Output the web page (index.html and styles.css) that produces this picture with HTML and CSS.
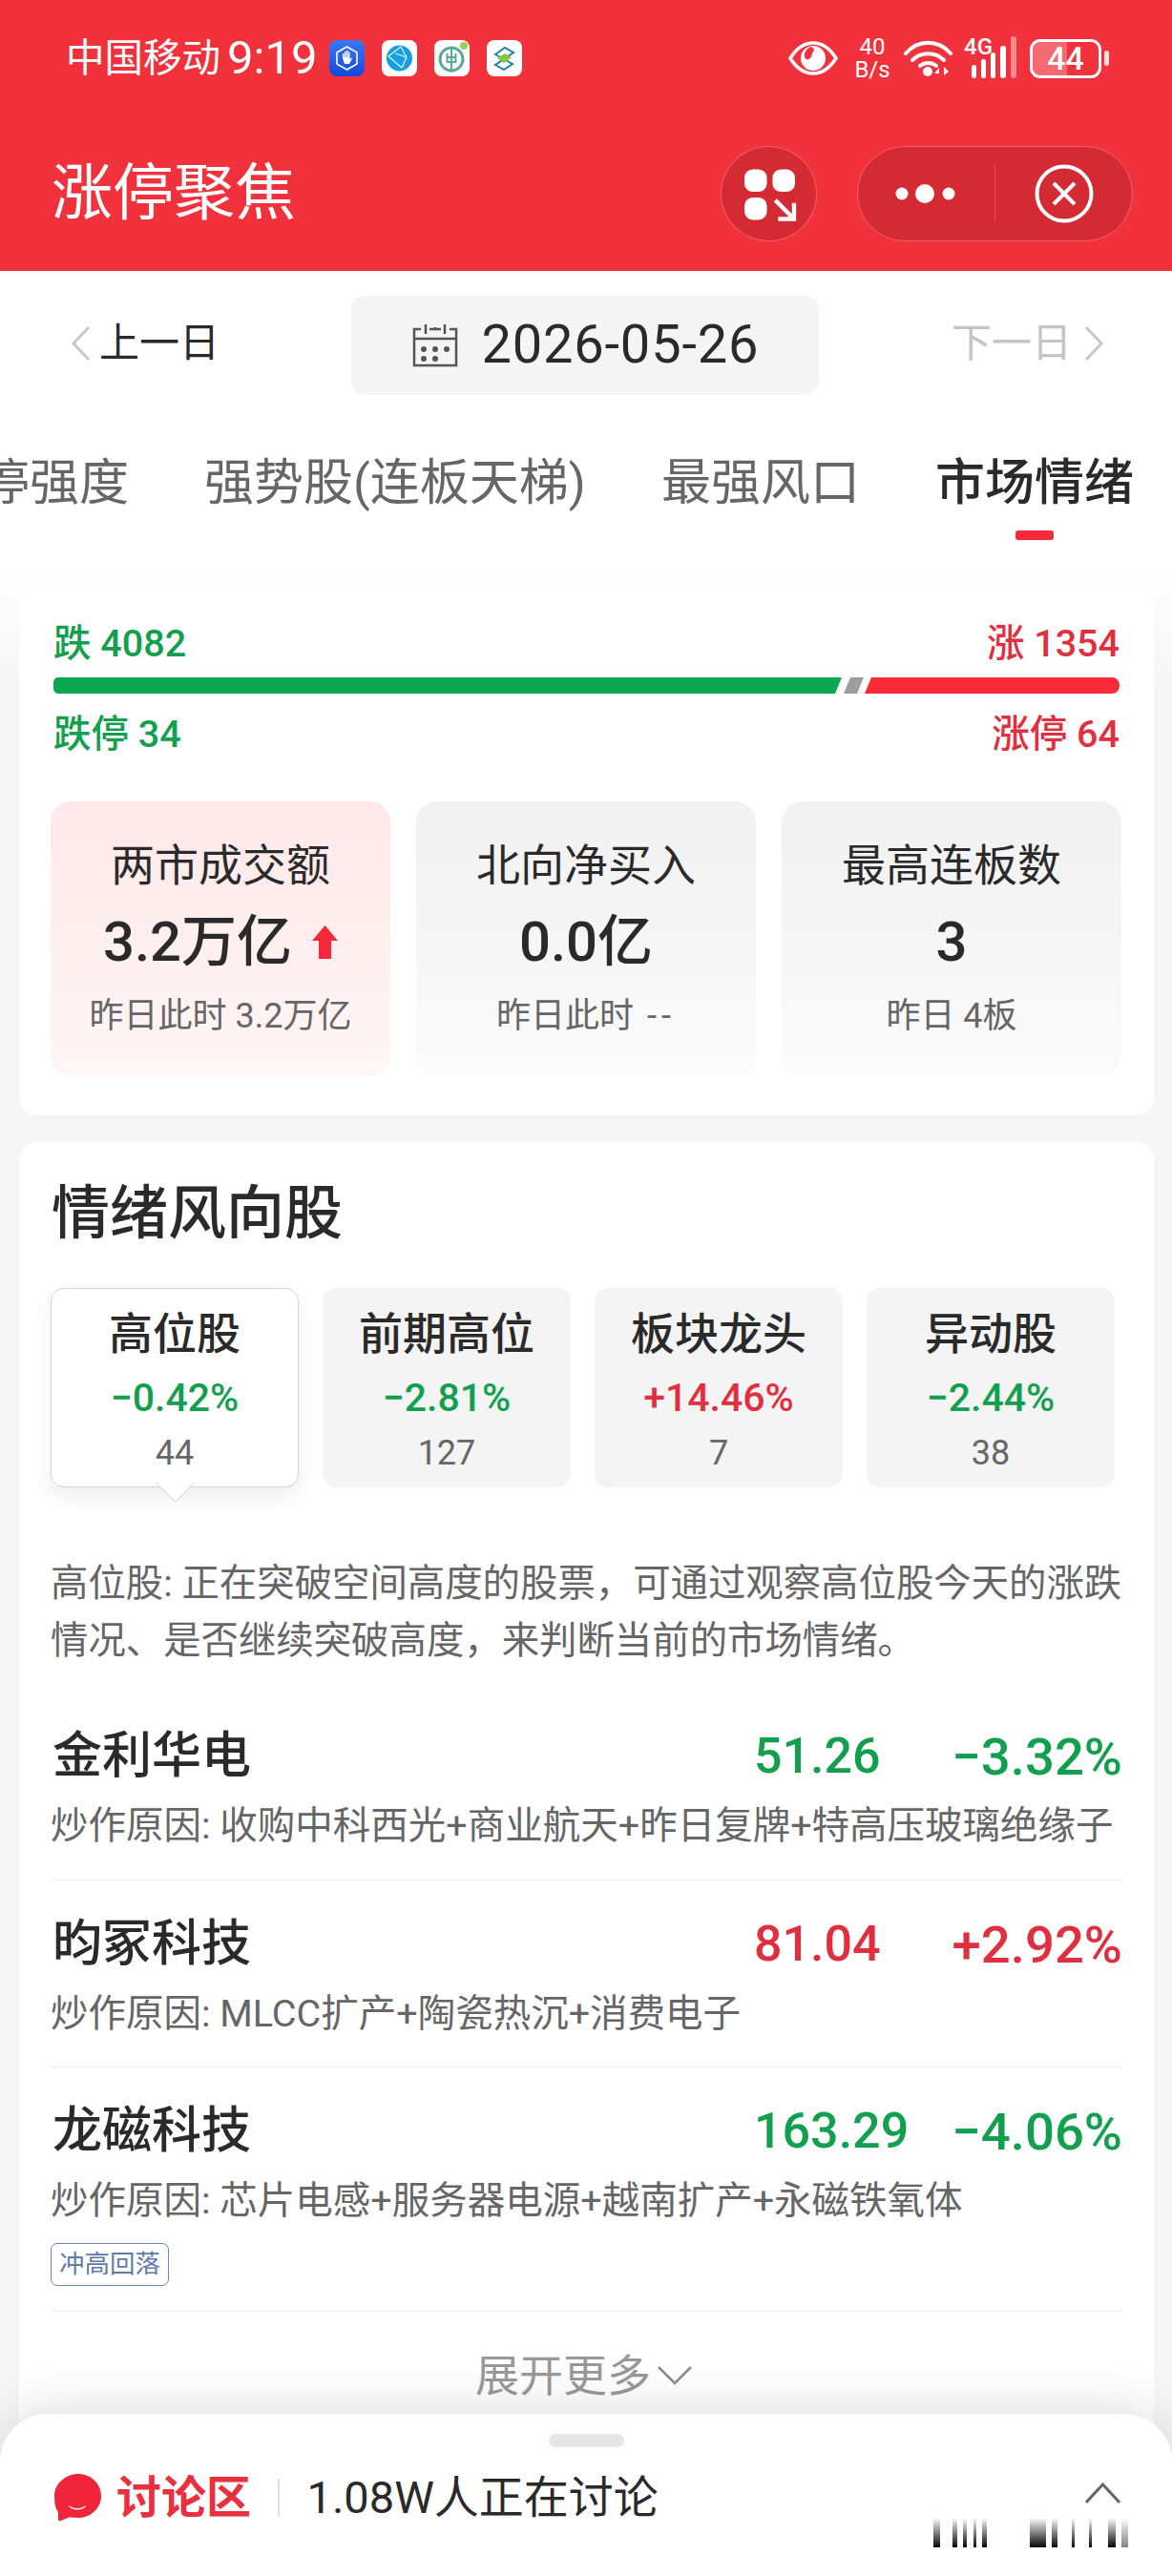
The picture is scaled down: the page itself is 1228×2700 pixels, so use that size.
FILE: index.html
```html
<!DOCTYPE html>
<html lang="zh-CN">
<head>
<meta charset="utf-8">
<title>涨停聚焦</title>
<link rel="stylesheet" href="styles.css">
</head>
<body>
<div class="page">
  <header class="header">
    <div class="status">
      <div class="status-left">
        <span class="carrier">中国移动</span>
        <span class="clock">9:19</span>
        <div class="apps">
          <svg class="app" viewBox="0 0 37 38"><defs><linearGradient id="ab" x1="0" y1="0" x2="0" y2="1"><stop offset="0" stop-color="#3a78f2"/><stop offset="1" stop-color="#1449dd"/></linearGradient></defs><rect width="37" height="38" rx="8" fill="url(#ab)"/><path d="M18.5 7 29 13v12l-10.500 6L8 25V13z" fill="none" stroke="#fff" stroke-width="1.600"/><path d="M14 19v-5h1.500v4h.5v-6h1.500v6h.5v-7h1.500v7h.5v-5.500h1.500V20l1.500-1.500 1 .8-3 5.700h-5z" fill="#fff"/></svg>
          <svg class="app" viewBox="0 0 37 38"><rect width="37" height="38" rx="8" fill="#fff"/><circle cx="18.500" cy="19" r="13.500" fill="#169fe0"/><path d="M7 17 20 7M7 17l14 12M20 7l6 11-5 11M26 18 14 14" fill="none" stroke="#dff3fb" stroke-width="1.200"/></svg>
          <svg class="app" viewBox="0 0 37 38"><rect width="37" height="38" rx="8" fill="#fff"/><circle cx="18" cy="20" r="12" fill="none" stroke="#5aa99a" stroke-width="3"/><path d="M18 7v27M13.500 14v9h9v-9M13.500 18h9" fill="none" stroke="#5aa99a" stroke-width="2"/><circle cx="31" cy="6" r="4" fill="#9ccf5a"/></svg>
          <svg class="app" viewBox="0 0 37 38"><rect width="37" height="38" rx="8" fill="#fff"/><path d="M9 15 19 8l9 5-10 7 9 5-9 6-9-5 9-6z" fill="none" stroke="#1b82a8" stroke-width="2"/><path d="M11 19 19 14l7 4-8 6z" fill="#8cc63f"/></svg>
        </div>
      </div>
      <div class="status-right">
        <svg class="eye" viewBox="0 0 52 38"><path d="M2 19C9 8 17 3 26 3s17 5 24 16c-7 11-15 16-24 16S9 30 2 19z" fill="none" stroke="#fff" stroke-width="3.500"/><circle cx="26" cy="19" r="13" fill="#fff"/><path d="M24 7c-5 2-8 6-7 11 1 3 4 3 6 1 2-2 1-5 4-8 0-2-1-3-3-4z" fill="#f1313b"/></svg>
        <div class="speed"><span>40</span><span>B/s</span></div>
        <svg class="wifi" viewBox="0 0 51 40"><g fill="none" stroke="#fff" stroke-width="4" stroke-linecap="round"><path d="M2 15C15 0 36 0 49 15"/><path d="M9 22c9-9 24-9 33 0"/><path d="M17 28c5-4 12-4 17 0"/></g><circle cx="25" cy="34" r="5" fill="#fff"/><path d="M37 38V30l-5 6h5zM42 29v9l5-4z" fill="#fff"/></svg>
        <div class="signal">
          <span class="gen">4G</span>
          <svg class="bars" viewBox="0 0 48 46"><rect x="0" y="30" width="5" height="14" rx="2.500" fill="#fff"/><rect x="10" y="24" width="5" height="20" rx="2.500" fill="#fff"/><rect x="20" y="17" width="5" height="27" rx="2.500" fill="#fff"/><rect x="30" y="10" width="6" height="34" rx="3" fill="#fff"/><rect x="41" y="0" width="6" height="44" rx="3" fill="#ff8a8f"/></svg>
        </div>
        <div class="battery"><div class="battery-body"><span class="battery-fill"></span><span class="battery-num">44</span></div><span class="battery-nub"></span></div>
      </div>
    </div>
    <div class="nav">
      <h1 class="nav-title">涨停聚焦</h1>
      <div class="nav-actions">
        <div class="round-btn">
          <svg viewBox="0 0 100 100" class="grid-ico"><rect x="24" y="24" width="24" height="24" rx="9" fill="#fff"/><rect x="54" y="24" width="24" height="24" rx="9" fill="#fff"/><rect x="24" y="54" width="24" height="24" rx="9" fill="#fff"/><path d="M57 57 75 75M77 60v17H60" fill="none" stroke="#fff" stroke-width="4.500"/></svg>
        </div>
        <div class="capsule">
          <div class="cap-half"><svg viewBox="0 0 64 24" class="dots"><circle cx="7" cy="12" r="6.500" fill="#fff"/><circle cx="31" cy="12" r="10" fill="#fff"/><circle cx="56" cy="12" r="6.500" fill="#fff"/></svg></div>
          <span class="cap-sep"></span>
          <div class="cap-half"><svg viewBox="0 0 62 62" class="close"><circle cx="31" cy="31" r="28.500" fill="none" stroke="#fff" stroke-width="4"/><path d="M20 20 42 42M42 20 20 42" stroke="#fff" stroke-width="4"/></svg></div>
        </div>
      </div>
    </div>
  </header>

  <div class="datebar">
    <div class="day-link"><svg class="chev" viewBox="0 0 21 38"><path d="M19 2 3 19l16 17" fill="none" stroke="#c8c8c8" stroke-width="3"/></svg><span>上一日</span></div>
    <div class="date-box">
      <svg class="cal" viewBox="0 0 48 48"><g fill="none" stroke="#555" stroke-width="2.500"><path d="M9 7H2v38h44V7h-7M18 7h12M2 17h44"/><path d="M14 2v10M34 2v10M24 5v2"/></g><g fill="#555"><circle cx="12" cy="28" r="3"/><circle cx="24" cy="28" r="3"/><circle cx="36" cy="28" r="3"/><circle cx="12" cy="38" r="3"/><circle cx="24" cy="38" r="3"/></g></svg>
      <span class="date-text">2026-05-26</span>
    </div>
    <div class="day-link is-off"><span>下一日</span><svg class="chev" viewBox="0 0 21 38"><path d="M2 2l16 17L2 36" fill="none" stroke="#c8c8c8" stroke-width="3"/></svg></div>
  </div>

  <nav class="tabs">
    <div class="tab">涨停强度</div>
    <div class="tab">强势股(连板天梯)</div>
    <div class="tab">最强风口</div>
    <div class="tab is-active">市场情绪</div>
  </nav>

  <main class="content">
    <section class="card market">
      <div class="line"><span class="down">跌 4082</span><span class="up">涨 1354</span></div>
      <div class="ratio"><span class="ratio-down"></span><span class="ratio-flat"></span><span class="ratio-up"></span></div>
      <div class="line line-limit"><span class="down">跌停 34</span><span class="up">涨停 64</span></div>
      <div class="stats">
        <div class="stat is-hot">
          <div class="stat-title">两市成交额</div>
          <div class="stat-value">3.2万亿<svg class="up-arrow" viewBox="0 0 27 35"><path d="M13.500 0 27 16h-7v19H7V16H0z" fill="#f5293a"/></svg></div>
          <div class="stat-sub">昨日此时 3.2万亿</div>
        </div>
        <div class="stat">
          <div class="stat-title">北向净买入</div>
          <div class="stat-value">0.0亿</div>
          <div class="stat-sub">昨日此时 <span class="dash">--</span></div>
        </div>
        <div class="stat">
          <div class="stat-title">最高连板数</div>
          <div class="stat-value">3</div>
          <div class="stat-sub">昨日 4板</div>
        </div>
      </div>
    </section>

    <section class="card mood">
      <h2 class="mood-title">情绪风向股</h2>
      <div class="groups">
        <div class="group is-current"><div class="group-name">高位股</div><div class="group-pct down">−0.42%</div><div class="group-num">44</div></div>
        <div class="group"><div class="group-name">前期高位</div><div class="group-pct down">−2.81%</div><div class="group-num">127</div></div>
        <div class="group"><div class="group-name">板块龙头</div><div class="group-pct up">+14.46%</div><div class="group-num">7</div></div>
        <div class="group"><div class="group-name">异动股</div><div class="group-pct down">−2.44%</div><div class="group-num">38</div></div>
      </div>
      <p class="desc">高位股: 正在突破空间高度的股票，可通过观察高位股今天的涨跌情况、是否继续突破高度，来判断当前的市场情绪。</p>
      <div class="stock first">
        <div class="stock-top"><span class="stock-name">金利华电</span><span class="stock-price down">51.26</span><span class="stock-pct down">−3.32%</span></div>
        <div class="stock-why">炒作原因: 收购中科西光+商业航天+昨日复牌+特高压玻璃绝缘子</div>
      </div>
      <div class="stock">
        <div class="stock-top"><span class="stock-name">昀冢科技</span><span class="stock-price up">81.04</span><span class="stock-pct up">+2.92%</span></div>
        <div class="stock-why">炒作原因: MLCC扩产+陶瓷热沉+消费电子</div>
      </div>
      <div class="stock tagged">
        <div class="stock-top"><span class="stock-name">龙磁科技</span><span class="stock-price down">163.29</span><span class="stock-pct down">−4.06%</span></div>
        <div class="stock-why">炒作原因: 芯片电感+服务器电源+越南扩产+永磁铁氧体</div>
        <span class="tag">冲高回落</span>
      </div>
      <div class="more">展开更多<svg class="more-chev" viewBox="0 0 36 20"><path d="M1 1l17 17L35 1" fill="none" stroke="#8c8c8c" stroke-width="2.500"/></svg></div>
    </section>
  </main>

  <aside class="sheet">
    <span class="handle"></span>
    <div class="sheet-row">
      <svg class="bubble" viewBox="0 0 49 50"><path d="M25 0c13 0 24 10 24 23S38 46 25 46c-4 0-8-1-11 0l-7 3c-2 1-3 0-3-2v-7C1 36 0 30 0 23 0 10 12 0 25 0z" fill="#f0253a"/><path d="M15 33c6 4 12 4 18 0-1 6-17 6-18 0z" fill="#ffe3e3"/></svg>
      <span class="sheet-name">讨论区</span>
      <span class="sheet-sep"></span>
      <span class="sheet-count">1.08W人正在讨论</span>
      <svg class="sheet-chev" viewBox="0 0 37 22"><path d="M1 21 18.500 2 36 21" fill="none" stroke="#666" stroke-width="3"/></svg>
    </div>
    <div class="glitch"></div>
  </aside>
</div>
</body>
</html>
```
FILE: styles.css
```css
* { box-sizing: border-box; }
html, body { margin: 0; padding: 0; }
body {
  width: 1228px;
  height: 2700px;
  overflow: hidden;
  background: #f6f6f6;
  font-family: Roboto, "Noto Sans CJK SC", sans-serif;
  color: #2a2a2a;
}
svg { display: block; flex: none; }
.page { position: relative; width: 1228px; height: 2700px; overflow: hidden; }
.down { color: #12a04f; }
.up { color: #e0303f; }

/* header */
.header { background: #f1313b; color: #fff; height: 284px; }
.status { height: 122px; display: flex; align-items: center; justify-content: space-between; padding: 0 66px 0 69px; }
.status-left { display: flex; align-items: center; }
.carrier { font-size: 40.5px; line-height: 50px; }
.clock { font-size: 49px; line-height: 50px; margin-left: 7px; }
.apps { display: flex; gap: 18px; margin-left: 13px; }
.app { width: 37px; height: 38px; }
.status-right { display: flex; align-items: center; }
.eye { width: 52px; height: 38px; }
.speed { display: flex; flex-direction: column; align-items: center; margin-left: 16px; width: 40px; font-size: 24px; line-height: 24px; }
.wifi { width: 51px; height: 40px; margin-left: 13px; }
.signal { position: relative; width: 56px; height: 46px; margin-left: 12px; }
.gen { position: absolute; left: 0; top: -2px; font-size: 24px; line-height: 26px; font-weight: 500; }
.bars { position: absolute; left: 8px; top: 0; width: 48px; height: 46px; }
.battery { display: flex; align-items: center; margin-left: 13px; }
.battery-body { position: relative; width: 75px; height: 41px; border: 3px solid #fff; border-radius: 11px; overflow: hidden; text-align: center; }
.battery-fill { position: absolute; left: 0; top: 0; bottom: 0; width: 36px; background: rgba(255,255,255,.28); }
.battery-num { position: relative; font-size: 34px; line-height: 35px; font-weight: 500; }
.battery-nub { width: 5px; height: 16px; background: #fff; opacity: .85; border-radius: 3px; margin-left: 3px; }

.nav { height: 162px; display: flex; align-items: center; justify-content: space-between; padding: 0 41px 0 54px; }
.nav-title { margin: 0; font-size: 64px; line-height: 80px; font-weight: 400; }
.nav-actions { display: flex; align-items: center; gap: 42px; }
.round-btn { width: 101px; height: 100px; border-radius: 50%; background: #d42a33; border: 1.500px solid #f4606a; }
.grid-ico { width: 100%; height: 100%; }
.capsule { width: 289px; height: 100px; border-radius: 50px; background: #d42a33; border: 1.500px solid #f4606a; display: flex; align-items: center; }
.cap-half { flex: 1; display: flex; align-items: center; justify-content: center; }
.cap-sep { width: 1.500px; height: 62px; background: #ea4a52; }
.dots { width: 64px; height: 24px; }
.close { width: 62px; height: 62px; }

/* date */
.datebar { display: flex; align-items: center; justify-content: space-between; height: 130px; padding: 26px 72px 0 74px; background: #fff; }
.day-link { display: flex; align-items: center; font-size: 42px; line-height: 50px; gap: 9px; width: 154px; white-space: nowrap; margin-bottom: 4px; }
.day-link.is-off { color: #c4c4c4; width: 159px; gap: 13px; }
.chev { width: 21px; height: 38px; }
.date-box { width: 490px; height: 104px; background: #f5f5f5; border-radius: 14px; display: flex; align-items: center; padding-left: 64px; gap: 25px; }
.cal { width: 48px; height: 48px; }
.date-text { font-size: 56px; line-height: 60px; letter-spacing: .8px; margin-bottom: 3px; }

/* tabs */
.tabs { display: flex; justify-content: flex-end; gap: 79px; padding: 58px 40px 0 0; background: #fff; overflow: hidden; height: 176px; }
.tab { flex: none; font-size: 52px; line-height: 70px; color: #666; white-space: nowrap; }
.tab.is-active { font-weight: 500; color: #2a2a2a; display: flex; flex-direction: column; align-items: center; }
.tab.is-active::after { content: ""; width: 40px; height: 10px; border-radius: 3px; background: #f5293a; margin-top: 14px; }

/* content */
.content { background: linear-gradient(#fff, #f6f6f6 130px) no-repeat; padding: 28px 19px 0 20px; height: 2110px; }
.card { background: #fff; border-radius: 18px; }
.market { height: 551px; padding: 32px 33px 0; }
.line { display: flex; justify-content: space-between; padding: 0 3px; font-size: 39.5px; line-height: 50px; font-weight: 500; }
.line-limit { margin-top: 18px; }
.ratio { display: flex; height: 17px; margin: 10px 3px 0; position: relative; }
.ratio-down { width: 826px; background: #0aa84f; border-radius: 5px 0 0 5px; clip-path: polygon(0 0, 100% 0, calc(100% - 7px) 100%, 0 100%); }
.ratio-flat { width: 21px; margin-left: 2px; background: #9e9e9e; clip-path: polygon(7px 0, 100% 0, calc(100% - 7px) 100%, 0 100%); }
.ratio-up { flex: 1; margin-left: 1px; background: #fb2a38; border-radius: 0 8px 8px 0; clip-path: polygon(7px 0, 100% 0, 100% 100%, 0 100%); }

.stats { display: grid; grid-template-columns: repeat(3, 356px); gap: 27px; margin-top: 45px; }
.stat { height: 288px; padding-top: 37px; border-radius: 22px; background: linear-gradient(#f1f1f1, #fbfbfb); text-align: center; }
.stat.is-hot { background: linear-gradient(#ffe8e9, #fff6f6); }
.stat-title { font-size: 46px; line-height: 60px; }
.stat-value { display: flex; align-items: center; justify-content: center; font-size: 58px; line-height: 90px; margin-top: 5px; font-weight: 500; }
.up-arrow { width: 27px; height: 35px; margin-left: 21px; }
.stat-sub { font-size: 36px; line-height: 50px; margin-top: 8px; color: #666; }
.dash { letter-spacing: 5px; margin-left: 5px; }

.mood { margin-top: 28px; height: 1500px; padding: 35px 33px 0; }
.mood-title { margin: 0; font-size: 61px; line-height: 80px; font-weight: 500; padding-left: 1px; }
.groups { display: grid; grid-template-columns: repeat(4, 260px); gap: 25px; margin-top: 38px; }
.group { position: relative; height: 209px; padding-top: 18px; border-radius: 14px; background: #f4f4f4; text-align: center; }
.group.is-current { background: #fff; border: 1.500px solid #d4d4d4; box-shadow: 0 10px 22px rgba(0,0,0,.07); padding-top: 17px; }
.group.is-current::after { content: ""; position: absolute; left: 50%; bottom: -11px; width: 28px; height: 28px; margin-left: -14px; background: #fff; border-right: 1.500px solid #d4d4d4; border-bottom: 1.500px solid #d4d4d4; transform: rotate(45deg); border-bottom-right-radius: 3px; }
.group-name { font-size: 46px; line-height: 60px; font-weight: 500; }
.group-pct { font-size: 41px; line-height: 50px; margin-top: 12px; font-weight: 500; }
.group-num { font-size: 36px; line-height: 46px; margin-top: 10px; color: #666; }

.desc { margin: 71px -6px 0 0; font-size: 39.4px; line-height: 60px; color: #666; }
.stock { padding: 32px 0 30px; border-bottom: 1.500px solid #eee; }
.stock.first { padding-top: 0; margin-top: 56px; padding-bottom: 31px; }
.stock.tagged { padding-bottom: 26px; }
.stock-top { display: flex; align-items: center; font-size: 52px; line-height: 70px; }
.stock-name { font-weight: 500; width: 737px; padding-left: 2px; }
.stock-price { font-weight: 500; }
.stock-pct { margin-left: auto; font-weight: 500; font-size: 54.5px; }
.stock-why { margin-top: 13px; font-size: 39.5px; line-height: 50px; color: #666; white-space: nowrap; }
.tag { display: block; width: 124px; height: 45px; margin-top: 19px; border: 1.500px solid #6d86ad; border-radius: 7px; font-size: 26.5px; line-height: 41px; text-align: center; color: #5f7ba8; }
.more { display: flex; align-items: center; justify-content: center; margin-top: 37px; padding-right: 6px; font-size: 46px; line-height: 60px; color: #999; }
.more-chev { width: 36px; height: 20px; margin-left: 7px; }

/* bottom sheet */
.sheet { position: absolute; left: 0; right: 0; bottom: 0; height: 170px; background: #fff; border-radius: 50px 50px 0 0; box-shadow: 0 -8px 50px rgba(0,0,0,.12); padding-top: 21px; }
.handle { display: block; width: 79px; height: 14px; margin: 0 auto; border-radius: 7px; background: #e6e6e6; }
.sheet-row { display: flex; align-items: center; height: 50px; margin-top: 28px; padding: 0 54px 0 57px; }
.bubble { width: 49px; height: 50px; }
.sheet-name { margin-left: 16px; font-size: 47px; line-height: 50px; font-weight: 700; color: #e8303f; }
.sheet-sep { width: 1.500px; height: 40px; margin-left: 28px; background: #e2e2e2; }
.sheet-count { margin-left: 29px; font-size: 47px; line-height: 50px; }
.sheet-chev { width: 37px; height: 22px; margin-left: auto; margin-top: -10px; }
.glitch {
  position: absolute;
  left: 978px;
  top: 109px;
  width: 222px;
  height: 31px;
  background: linear-gradient(90deg,
    #111 0 7px, transparent 7px 20px, #111 20px 25px, transparent 25px 31px, #111 31px 35px, transparent 35px 42px,
    #111 42px 45px, transparent 45px 51px, #111 51px 56px, transparent 56px 101px, #111 101px 118px, transparent 118px 124px,
    #111 124px 130px, transparent 130px 145px, #111 145px 148px, transparent 148px 163px, #111 163px 166px, transparent 166px 183px,
    #111 183px 191px, transparent 191px 197px, #888 197px 204px, transparent 204px);
  -webkit-mask-image: linear-gradient(transparent, #000 95%);
  mask-image: linear-gradient(transparent, #000 95%);
}
```
